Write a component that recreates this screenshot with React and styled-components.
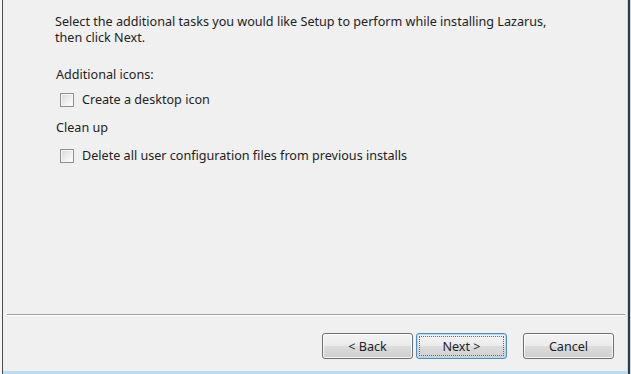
import React from "react";
import styled, { createGlobalStyle } from "styled-components";

const GlobalStyle = createGlobalStyle`
  html, body {
    margin: 0;
    padding: 0;
    background: #f0f0f0;
  }
  body {
    font-family: "Noto Sans", "Open Sans", sans-serif;
  }
`;

const Frame = styled.div`
  width: 631px;
  height: 374px;
  box-sizing: border-box;
  display: flex;
  background: #f0f0f0;
  border-left: 2px solid #f6f6f6;
  border-right: 1px solid #c9d9e4;
  overflow: hidden;
`;

const Edge = styled.div`
  flex: 1;
  display: flex;
  border-left: 1px solid #4b4b4b;
  border-right: 2px solid #2c3e4c;
`;

const Dialog = styled.div`
  flex: 1;
  display: flex;
  flex-direction: column;
  border-right: 1px solid #b4d6ee;
  border-bottom: 3px solid #bcdcef;
  color: #222222;
  font-size: 12.6px;
`;

const Body = styled.div`
  flex: 1;
  padding: 14px 0 0 52px;
`;

const Intro = styled.p`
  margin: 0 0 21px;
  line-height: 16px;
  white-space: nowrap;
`;

const Heading = styled.div`
  line-height: 16px;
  height: 16px;
  margin-left: 1px;
`;

const Option = styled.label`
  display: flex;
  align-items: center;
  gap: 8px;
  height: 17px;
  margin: ${(p) => p.$top}px 0 ${(p) => p.$bottom || 0}px 5px;
`;

const Box = styled.span`
  width: 12px;
  height: 12px;
  border: 1px solid #8e8f8f;
  background: linear-gradient(135deg, #d8d8d8 0%, #f2f2f2 65%, #ffffff 100%);
  box-shadow: inset 0 0 0 1px #f6f6f6;
`;

const Separator = styled.div`
  margin: 0 2px 0 4px;
  height: 1px;
  background: #a0a0a0;
  border-bottom: 1px solid #ffffff;
`;

const Footer = styled.div`
  height: 55px;
  display: flex;
  align-items: flex-start;
  padding: 17px 0 0 319px;
  box-sizing: border-box;
`;

const Button = styled.button`
  width: 91px;
  height: 26px;
  margin-right: ${(p) => p.$gap || 3}px;
  padding: 0;
  font: inherit;
  color: #222222;
  border: 1px solid ${(p) => (p.$focused ? "#4f8fc0" : "#707070")};
  border-radius: 3px;
  background: linear-gradient(#f3f3f3 0%, #ebebeb 50%, #dddddd 51%, #cfcfcf 100%);
  box-shadow: inset 0 0 0 1px
    ${(p) => (p.$focused ? "rgba(170, 220, 245, 0.9)" : "rgba(255, 255, 255, 0.75)")};
  display: flex;
  align-items: center;
  justify-content: center;
`;

const FocusRing = styled.span`
  flex: 1;
  align-self: stretch;
  margin: 3px;
  display: flex;
  align-items: center;
  justify-content: center;
  outline: 1px dotted #6a6a6a;
`;

function App() {
  return (
    <>
      <GlobalStyle />
      <Frame>
        <Edge>
          <Dialog>
            <Body>
              <Intro>
                Select the additional tasks you would like Setup to perform
                while installing Lazarus,
                <br />
                then click Next.
              </Intro>
              <Heading>Additional icons:</Heading>
              <Option $top={8} $bottom={12}>
                <Box />
                Create a desktop icon
              </Option>
              <Heading>Clean up</Heading>
              <Option $top={11}>
                <Box />
                Delete all user configuration files from previous installs
              </Option>
            </Body>
            <Separator />
            <Footer>
              <Button>&lt; Back</Button>
              <Button $focused $gap={16}>
                <FocusRing>Next &gt;</FocusRing>
              </Button>
              <Button>Cancel</Button>
            </Footer>
          </Dialog>
        </Edge>
      </Frame>
    </>
  );
}

export default App;
